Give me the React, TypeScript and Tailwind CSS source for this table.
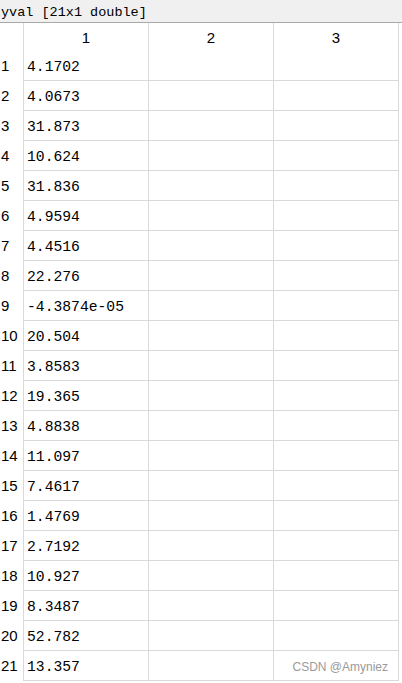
const values = [
  "4.1702",
  "4.0673",
  "31.873",
  "10.624",
  "31.836",
  "4.9594",
  "4.4516",
  "22.276",
  "-4.3874e-05",
  "20.504",
  "3.8583",
  "19.365",
  "4.8838",
  "11.097",
  "7.4617",
  "1.4769",
  "2.7192",
  "10.927",
  "8.3487",
  "52.782",
  "13.357",
];

const mono = "font-['Liberation_Mono','DejaVu_Sans_Mono',monospace]";
const sans = "font-['Liberation_Sans',Arial,sans-serif]";

export default function App() {
  return (
    <div className="h-[683px] w-[402px] overflow-hidden bg-white text-black">
      {/* Variable title bar */}
      <div
        className={`flex h-[23px] items-center border-b border-[#a9a9a9] bg-[#f0f0f0] pl-[1px] pt-[3px] text-[13.5px] leading-none ${mono}`}
      >
        yval [21x1 double]
      </div>

      <div className="grid grid-cols-[24px_125px_125px_125px_1fr]">
        {/* Column headers */}
        <div className="h-[28px] border-r border-[#d9d9d9]" />
        {["1", "2", "3"].map((c) => (
          <div
            key={c}
            className={`flex h-[28px] items-center justify-center border-r border-[#d9d9d9] pt-[2px] text-[15px] ${sans}`}
          >
            {c}
          </div>
        ))}
        <div />

        {/* Data rows */}
        {values.map((v, i) => (
          <div key={i} className="contents">
            <div
              className={`flex h-[30px] items-center border-r border-[#d9d9d9] pl-[1px] text-[15px] ${sans}`}
            >
              {i + 1}
            </div>
            <div
              className={`flex h-[30px] items-center border-r border-b border-[#d9d9d9] pl-[3px] pt-[3px] text-[14.7px] ${mono}`}
            >
              {v}
            </div>
            <div className="h-[30px] border-r border-b border-[#d9d9d9]" />
            <div className="relative h-[30px] border-r border-b border-[#d9d9d9]">
              {i === 20 && (
                <span
                  className={`absolute right-[10px] top-[7px] text-[12px] text-[#9a9a9a] ${sans}`}
                >
                  CSDN @Amyniez
                </span>
              )}
            </div>
            <div />
          </div>
        ))}
      </div>
    </div>
  );
}
